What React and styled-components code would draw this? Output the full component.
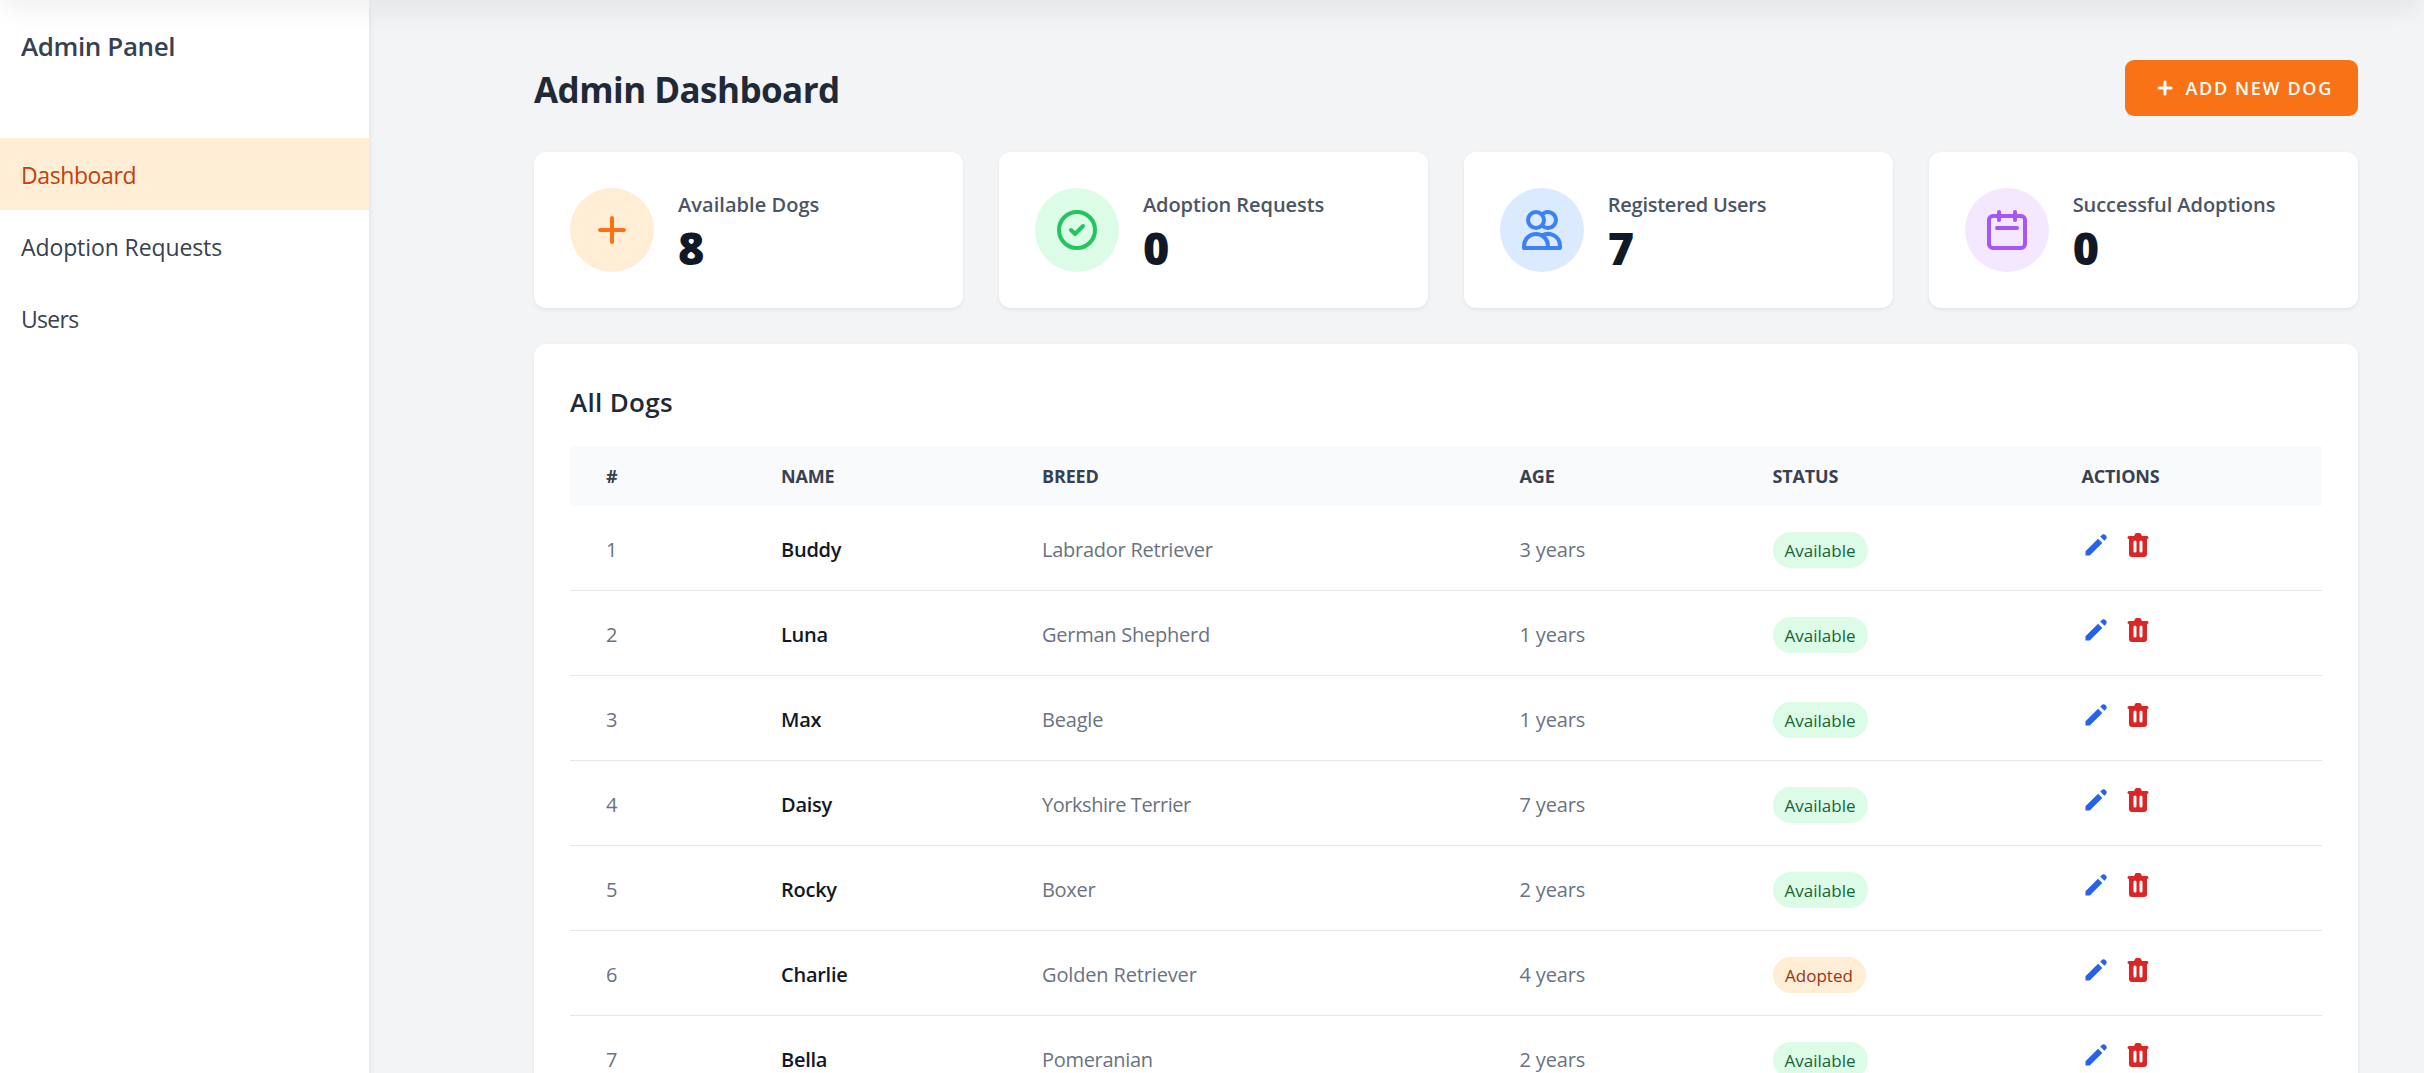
import React from "react";
import styled, { createGlobalStyle } from "styled-components";

const GlobalStyle = createGlobalStyle`
  *, *::before, *::after { box-sizing: border-box; }
  html, body { margin: 0; height: 100%; }
  body {
    background: #f3f4f6;
    color: #111827;
    font-family: "Open Sans", "Noto Sans", sans-serif;
    overflow: hidden;
  }
`;

const Page = styled.div`
  position: relative;
  display: flex;
  height: 1073px;
  overflow: hidden;
  background: #f3f4f6;
`;

const TopShadow = styled.div`
  position: absolute;
  left: 0;
  right: 0;
  top: -60px;
  height: 60px;
  box-shadow: 0 12px 28px -4px rgba(0, 0, 0, 0.07);
  z-index: 2;
`;

const Sidebar = styled.aside`
  flex: 0 0 369px;
  background: #fff;
  box-shadow: 0 6px 9px -1.5px rgba(0, 0, 0, 0.1), 0 3px 6px -3px rgba(0, 0, 0, 0.1);
`;

const Brand = styled.h2`
  margin: 0;
  height: 138px;
  padding: 25px 21px 0;
  font-size: 26px;
  line-height: 42px;
  font-weight: 600;
  color: #374151;
`;

const Fit = styled.span`
  display: inline-block;
  white-space: nowrap;
  letter-spacing: ${(p) => p.$ls || 0}px;
`;

const NavItem = styled.a`
  display: flex;
  align-items: center;
  height: 72px;
  padding: 1px 21px 0;
  font-size: 23px;
  line-height: 36px;
  color: ${(p) => (p.$active ? "#c2410c" : "#374151")};
  background: ${(p) => (p.$active ? "#ffedd5" : "transparent")};
`;

const Main = styled.main`
  flex: 1;
  padding: 60px 66.5px 0 165px;
`;

const Header = styled.header`
  display: flex;
  justify-content: space-between;
  align-items: center;
  height: 56px;
  margin-bottom: 36px;
`;

const Title = styled.h1`
  margin: 3px 0 0;
  font-size: 35px;
  line-height: 48px;
  font-weight: 700;
  color: #1f2937;
`;

const AddButton = styled.button`
  display: flex;
  align-items: center;
  gap: 6px;
  width: 233px;
  height: 56px;
  padding: 0 0 0 25px;
  border: 0;
  border-radius: 9px;
  background: #f97316;
  color: #fff;
  font: 600 18px/27px "Open Sans", "Noto Sans", sans-serif;
  text-transform: uppercase;
`;

const Stats = styled.section`
  display: grid;
  grid-template-columns: repeat(4, 1fr);
  gap: 36px;
  margin-bottom: 36px;
`;

const StatCard = styled.div`
  display: flex;
  align-items: center;
  height: 156px;
  padding: 36px;
  border-radius: 12px;
  background: #fff;
  box-shadow: 0 1.5px 4.5px rgba(0, 0, 0, 0.05), 0 1.5px 3px -1.5px rgba(0, 0, 0, 0.06);
`;

const StatIcon = styled.div`
  display: flex;
  align-items: center;
  justify-content: center;
  width: 84px;
  height: 84px;
  margin-right: 24px;
  border-radius: 50%;
  background: ${(p) => p.$bg};
  color: ${(p) => p.$fg};
`;

const StatText = styled.div`
  display: flex;
  flex-direction: column;
  padding-top: 4px;
`;

const StatLabel = styled.span`
  font-size: 20px;
  line-height: 30px;
  font-weight: 600;
  color: #4b5563;
`;

const StatValue = styled.span`
  font-size: 45px;
  line-height: 55px;
  font-weight: 800;
  color: #111827;
`;

const Panel = styled.section`
  height: 800px;
  padding: 36px;
  border-radius: 12px;
  background: #fff;
  box-shadow: 0 1.5px 4.5px rgba(0, 0, 0, 0.05), 0 1.5px 3px -1.5px rgba(0, 0, 0, 0.06);
`;

const PanelTitle = styled.h3`
  margin: 0;
  height: 66px;
  padding-top: 1px;
  font-size: 26px;
  line-height: 42px;
  font-weight: 600;
  color: #1f2937;
`;

const Row = styled.div`
  display: grid;
  grid-template-columns: 175px 261px 477.5px 253px 309px 1fr;
  align-items: center;
  height: 85px;
  border-bottom: 1.5px solid #e5e7eb;
  font-size: 20px;
  line-height: 30px;
  color: #6b7280;
`;

const HeadRow = styled(Row)`
  height: 60px;
  border: 0;
  background: #f9fafb;
  font-size: 18px;
  font-weight: 700;
  color: #374151;
  text-transform: uppercase;
`;

const Cell = styled.div`
  padding: ${(p) => p.$top ?? 4}px 0 0 36px;
  font-weight: ${(p) => (p.$strong ? 600 : "inherit")};
  color: ${(p) => (p.$strong ? "#111827" : "inherit")};
`;

const Badge = styled.span`
  display: flex;
  align-items: center;
  justify-content: center;
  width: ${(p) => (p.$adopted ? 93 : 95)}px;
  height: 36px;
  padding-top: 2px;
  border-radius: 18px;
  font-size: 17px;
  line-height: 24px;
  color: ${(p) => (p.$adopted ? "#9a3412" : "#166534")};
  background: ${(p) => (p.$adopted ? "#ffedd5" : "#dcfce7")};
`;

const Actions = styled.div`
  display: flex;
  gap: 12px;
  padding-left: 35.5px;
  margin-top: -6.5px;
`;

const PlusIcon = () => (
  <svg width="48" height="48" viewBox="0 0 24 24" fill="none" stroke="currentColor" strokeWidth="2" strokeLinecap="round">
    <path d="M12 6v12M6 12h12" />
  </svg>
);

const SmallPlusIcon = () => (
  <svg width="30" height="30" viewBox="0 0 20 20" fill="currentColor">
    <path fillRule="evenodd" clipRule="evenodd" d="M10 5a1 1 0 011 1v3h3a1 1 0 110 2h-3v3a1 1 0 11-2 0v-3H6a1 1 0 110-2h3V6a1 1 0 011-1z" />
  </svg>
);

const CheckIcon = () => (
  <svg width="48" height="48" viewBox="0 0 24 24" fill="none" stroke="currentColor" strokeWidth="2" strokeLinecap="round" strokeLinejoin="round">
    <path d="M9 12l2 2 4-4" />
    <circle cx="12" cy="12" r="9" />
  </svg>
);

const UsersIcon = () => (
  <svg width="48" height="48" viewBox="0 0 24 24" fill="none" stroke="currentColor" strokeWidth="2" strokeLinecap="round" strokeLinejoin="round">
    <path d="M12 4.354a4 4 0 110 5.292M15 21H3v-1a6 6 0 0112 0v1zm0 0h6v-1a6 6 0 00-9-5.197M13 7a4 4 0 11-8 0 4 4 0 018 0z" />
  </svg>
);

const CalendarIcon = () => (
  <svg width="48" height="48" viewBox="0 0 24 24" fill="none" stroke="currentColor" strokeWidth="2" strokeLinecap="round" strokeLinejoin="round">
    <path d="M8 7V3m8 4V3m-9 8h10M5 21h14a2 2 0 002-2V7a2 2 0 00-2-2H5a2 2 0 00-2 2v12a2 2 0 002 2z" />
  </svg>
);

const PencilIcon = () => (
  <svg width="30" height="30" viewBox="0 0 20 20" fill="#2563eb">
    <path d="M13.586 3.586a2 2 0 112.828 2.828l-.793.793-2.828-2.828.793-.793zM11.379 5.793L3 14.172V17h2.828l8.38-8.379-2.83-2.828z" />
  </svg>
);

const TrashIcon = () => (
  <svg width="30" height="30" viewBox="0 0 20 20" fill="#dc2626">
    <path fillRule="evenodd" clipRule="evenodd" d="M9 2a1 1 0 00-.894.553L7.382 4H4a1 1 0 000 2v10a2 2 0 002 2h8a2 2 0 002-2V6a1 1 0 100-2h-3.382l-.724-1.447A1 1 0 0011 2H9zM7 8a1 1 0 012 0v6a1 1 0 11-2 0V8zm5-1a1 1 0 00-1 1v6a1 1 0 102 0V8a1 1 0 00-1-1z" />
  </svg>
);

const stats = [
  { label: "Available Dogs", ls: 0.05, value: 8, bg: "#ffedd5", fg: "#f97316", icon: <PlusIcon /> },
  { label: "Adoption Requests", ls: -0.05, value: 0, bg: "#dcfce7", fg: "#22c55e", icon: <CheckIcon /> },
  { label: "Registered Users", ls: -0.25, value: 7, bg: "#dbeafe", fg: "#3b82f6", icon: <UsersIcon /> },
  { label: "Successful Adoptions", ls: -0.05, value: 0, bg: "#f3e8ff", fg: "#a855f7", icon: <CalendarIcon /> },
];

const dogs = [
  { name: "Buddy", breed: "Labrador Retriever", age: 3, ls: -0.25 },
  { name: "Luna", breed: "German Shepherd", age: 1, ls: -0.25 },
  { name: "Max", breed: "Beagle", age: 1, ls: -0.2 },
  { name: "Daisy", breed: "Yorkshire Terrier", age: 7, ls: -0.45 },
  { name: "Rocky", breed: "Boxer", age: 2, ls: -0.3 },
  { name: "Charlie", breed: "Golden Retriever", age: 4, ls: -0.15, adopted: true },
  { name: "Bella", breed: "Pomeranian", age: 2, ls: -0.3 },
];

const columns = ["#", "Name", "Breed", "Age", "Status", "Actions"];

export default function App() {
  return (
    <>
      <GlobalStyle />
      <Page>
        <TopShadow />
        <Sidebar>
          <Brand><Fit $ls={-0.4}>Admin Panel</Fit></Brand>
          <NavItem $active><Fit $ls={-0.4}>Dashboard</Fit></NavItem>
          <NavItem><Fit $ls={-0.1}>Adoption Requests</Fit></NavItem>
          <NavItem><Fit $ls={-0.7}>Users</Fit></NavItem>
        </Sidebar>
        <Main>
          <Header>
            <Title><Fit $ls={-0.55}>Admin Dashboard</Fit></Title>
            <AddButton><SmallPlusIcon /><Fit $ls={1.65}>Add New Dog</Fit></AddButton>
          </Header>
          <Stats>
            {stats.map((s) => (
              <StatCard key={s.label}>
                <StatIcon $bg={s.bg} $fg={s.fg}>{s.icon}</StatIcon>
                <StatText>
                  <StatLabel><Fit $ls={s.ls}>{s.label}</Fit></StatLabel>
                  <StatValue>{s.value}</StatValue>
                </StatText>
              </StatCard>
            ))}
          </Stats>
          <Panel>
            <PanelTitle><Fit $ls={0.3}>All Dogs</Fit></PanelTitle>
            <HeadRow>
              {columns.map((c) => <Cell key={c} $top={0}><Fit $ls={-0.15}>{c}</Fit></Cell>)}
            </HeadRow>
            {dogs.map((dog, i) => (
              <Row key={dog.name}>
                <Cell>{i + 1}</Cell>
                <Cell $strong><Fit $ls={-0.25}>{dog.name}</Fit></Cell>
                <Cell><Fit $ls={dog.ls}>{dog.breed}</Fit></Cell>
                <Cell><Fit $ls={-0.15}>{dog.age} years</Fit></Cell>
                <Cell $top={3}><Badge $adopted={dog.adopted}><Fit>{dog.adopted ? "Adopted" : "Available"}</Fit></Badge></Cell>
                <Actions><PencilIcon /><TrashIcon /></Actions>
              </Row>
            ))}
          </Panel>
        </Main>
      </Page>
    </>
  );
}
